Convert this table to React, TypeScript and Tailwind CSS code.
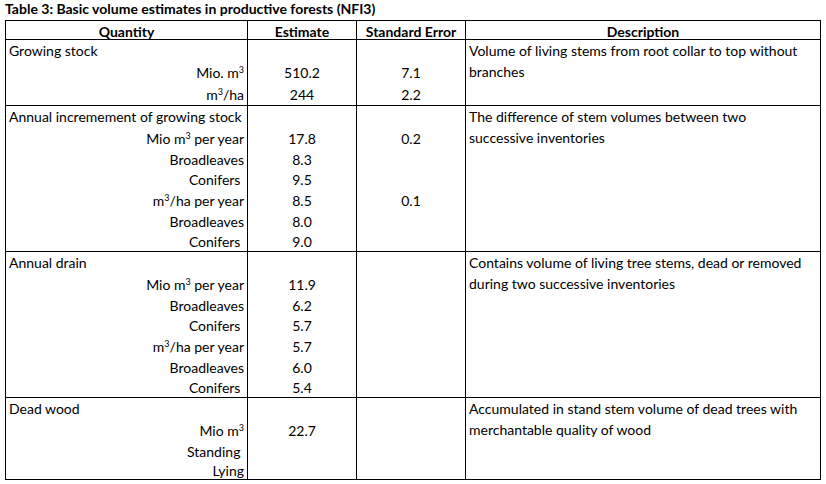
import React from 'react';

type Row = {
  label: React.ReactNode;
  est?: string;
  se?: string;
};

type Group = {
  name: string;
  desc: string[];
  rowsClass: string;
  spanClass: string;
  rows: Row[];
};

const M3 = () => (
  <>
    m<sup className="text-[9px]">3</sup>
  </>
);

const groups: Group[] = [
  {
    name: 'Growing stock',
    desc: ['Volume of living stems from root collar to top without', 'branches'],
    rowsClass: 'grid-rows-[21px_22px_22px]',
    spanClass: 'row-span-3',
    rows: [
      { label: <>Mio. <M3 /></>, est: '510.2', se: '7.1' },
      { label: <><M3 />/ha</>, est: '244', se: '2.2' },
    ],
  },
  {
    name: 'Annual incremement of growing stock',
    desc: ['The difference of stem volumes between two', 'successive inventories'],
    rowsClass: 'grid-rows-[21px_22px_20px_20px_22px_20px_20px]',
    spanClass: 'row-span-7',
    rows: [
      { label: <>Mio <M3 /> per year</>, est: '17.8', se: '0.2' },
      { label: 'Broadleaves', est: '8.3' },
      { label: 'Conifers\u00a0', est: '9.5' },
      { label: <><M3 />/ha per year</>, est: '8.5', se: '0.1' },
      { label: 'Broadleaves', est: '8.0' },
      { label: 'Conifers\u00a0', est: '9.0' },
    ],
  },
  {
    name: 'Annual drain',
    desc: ['Contains volume of living tree stems, dead or removed', 'during two successive inventories'],
    rowsClass: 'grid-rows-[21px_22px_20px_20px_22px_20px_20px]',
    spanClass: 'row-span-7',
    rows: [
      { label: <>Mio <M3 /> per year</>, est: '11.9' },
      { label: 'Broadleaves', est: '6.2' },
      { label: 'Conifers\u00a0', est: '5.7' },
      { label: <><M3 />/ha per year</>, est: '5.7' },
      { label: 'Broadleaves', est: '6.0' },
      { label: 'Conifers\u00a0', est: '5.4' },
    ],
  },
  {
    name: 'Dead wood',
    desc: ['Accumulated in stand stem volume of dead trees with', 'merchantable quality of wood'],
    rowsClass: 'grid-rows-[21px_22px_20px_18px]',
    spanClass: 'row-span-4',
    rows: [
      { label: <>Mio <M3 /></>, est: '22.7' },
      { label: 'Standing\u00a0' },
      { label: 'Lying' },
    ],
  },
];

const cols = 'grid grid-cols-[242px_109px_109px_355px]';
const cell = 'flex items-center border-r border-black whitespace-nowrap';

export default function App() {
  return (
    <div className="min-h-[484px] w-[826px] bg-white text-black font-['Lato',sans-serif] text-[14px]">
      <div className="h-[20px] pl-[5px] text-[14px] font-bold leading-[18px]">
        Table 3: Basic volume estimates in productive forests (NFI3)
      </div>
      <div className="ml-[5px] w-[816px] border-l border-b border-black">
        <div className={`${cols} h-[19px] border-t border-black font-bold`}>
          <div className={`${cell} justify-center`}>Quantity</div>
          <div className={`${cell} justify-center`}>Estimate</div>
          <div className={`${cell} justify-center`}>Standard Error</div>
          <div className={`${cell} justify-center`}>Description</div>
        </div>
        {groups.map((g) => (
          <div key={g.name} className={`${cols} ${g.rowsClass} border-t border-black`}>
            <div className={`${cell} pl-[3px]`}>
              <span>{g.name}</span>
            </div>
            <div className={cell} />
            <div className={cell} />
            <div className={`${g.spanClass} border-r border-black pl-[3px] leading-[21px] whitespace-nowrap`}>
              {g.desc.map((line) => (
                <div key={line}>{line}</div>
              ))}
            </div>
            {g.rows.map((r, i) => (
              <React.Fragment key={i}>
                <div className={`${cell} justify-end pr-[3px]`}>
                  <span>{r.label}</span>
                </div>
                <div className={`${cell} justify-center`}>
                  <span>{r.est}</span>
                </div>
                <div className={`${cell} justify-center`}>
                  <span>{r.se}</span>
                </div>
              </React.Fragment>
            ))}
          </div>
        ))}
      </div>
    </div>
  );
}
